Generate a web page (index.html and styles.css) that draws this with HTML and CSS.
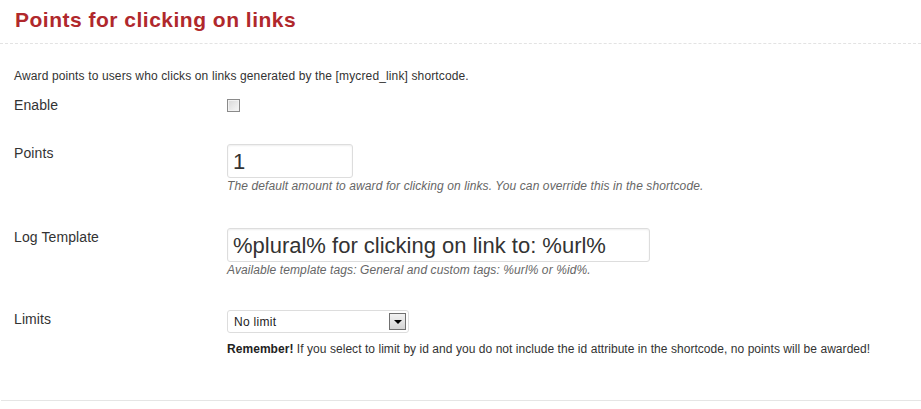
FILE: index.html
```html
<!DOCTYPE html>
<html lang="en">
<head>
<meta charset="utf-8">
<title>Points for clicking on links</title>
<link rel="stylesheet" href="styles.css">
</head>
<body>
<div class="hook">
  <h2 class="hook-title">Points for clicking on links</h2>
  <p class="hook-intro">Award points to users who clicks on links generated by the [mycred_link] shortcode.</p>

  <div class="form-rows">
    <div class="row row-enable">
      <label class="row-label" for="enable">Enable</label>
      <div class="row-field">
        <input type="checkbox" id="enable" class="checkbox">
      </div>
    </div>

    <div class="row row-points">
      <label class="row-label" for="points">Points</label>
      <div class="row-field">
        <input type="text" id="points" class="text-input input-short" value="1">
        <span class="description">The default amount to award for clicking on links. You can override this in the shortcode.</span>
      </div>
    </div>

    <div class="row">
      <label class="row-label" for="log">Log Template</label>
      <div class="row-field">
        <input type="text" id="log" class="text-input input-long" value="%plural% for clicking on link to: %url%">
        <span class="description">Available template tags: General and custom tags: %url% or %id%.</span>
      </div>
    </div>

    <div class="row">
      <span class="row-label">Limits</span>
      <div class="row-field">
        <div class="select">
          <span class="select-value">No limit</span>
          <span class="select-arrow"><span class="tri"></span></span>
        </div>
        <p class="note"><strong>Remember!</strong> If you select to limit by id and you do not include the id attribute in the shortcode, no points will be awarded!</p>
      </div>
    </div>
  </div>
</div>
</body>
</html>
```

FILE: styles.css
```css
html, body {
  margin: 0;
  padding: 0;
  background: #ffffff;
}

body {
  font-family: "Liberation Sans", Arial, sans-serif;
  color: #333333;
  width: 921px;
  height: 409px;
  overflow: hidden;
}

.hook {
  border-bottom: 1px solid #e5e5e5;
  margin-left: 1px;
  height: 401px;
  box-sizing: border-box;
}

.hook-title {
  margin: 0 0 0 -1px;
  padding: 7px 0 11px 15px;
  font-size: 21px;
  line-height: 25px;
  font-weight: bold;
  letter-spacing: 0.5px;
  color: #b0282c;
  border-bottom: 1px dashed #e3e3e3;
}

.hook-intro {
  margin: 24px 0 0 13px;
  font-size: 12px;
  line-height: 16px;
  letter-spacing: 0.13px;
}

.form-rows {
  display: flex;
  flex-direction: column;
  gap: 32px;
  margin-top: 13px;
  padding-left: 13px;
}

.row {
  display: grid;
  grid-template-columns: 213px 1fr;
  align-items: start;
}

.row-enable {
  margin-bottom: -1px;
}

.row-enable .row-label {
  line-height: 16px;
}

.row-points {
  margin-bottom: 2px;
}

.row-label {
  font-size: 14px;
  line-height: 18px;
  letter-spacing: 0.1px;
}

.row-field {
  display: flex;
  flex-direction: column;
  align-items: flex-start;
}

.checkbox {
  appearance: none;
  -webkit-appearance: none;
  margin: 2px 0 0 0;
  width: 13px;
  height: 13px;
  border: 1px solid #8a8a8a;
  box-sizing: border-box;
  background: linear-gradient(135deg, #d8d8d8 0%, #f8f8f8 100%);
  box-shadow: inset 0 0 0 1px #f2f2f2;
}

.text-input {
  margin: 0;
  box-sizing: border-box;
  height: 34px;
  border: 1px solid #dddddd;
  border-radius: 3px;
  box-shadow: inset 0 1px 2px rgba(0, 0, 0, 0.07);
  background: #ffffff;
  font-family: "Liberation Sans", Arial, sans-serif;
  font-size: 22px;
  color: #333333;
  padding: 2px 5px 0 5px;
  outline: none;
}

.input-short {
  width: 126px;
}

.input-long {
  width: 423px;
}

.description {
  font-size: 12px;
  line-height: 16px;
  font-style: italic;
  letter-spacing: 0.1px;
  color: #666666;
}

.select {
  display: flex;
  align-items: center;
  justify-content: space-between;
  box-sizing: border-box;
  width: 182px;
  height: 23px;
  border: 1px solid #dddddd;
  border-radius: 3px;
  padding: 0 2px 0 6px;
  background: #ffffff;
}

.select-value {
  font-size: 12px;
  letter-spacing: 0.3px;
  color: #222222;
}

.select-arrow {
  display: flex;
  align-items: center;
  justify-content: center;
  box-sizing: border-box;
  width: 17px;
  height: 17px;
  border: 1px solid #707070;
  background: linear-gradient(#f2f2f2, #d4d4d4);
}

.tri {
  width: 0;
  height: 0;
  border-left: 4px solid transparent;
  border-right: 4px solid transparent;
  border-top: 4px solid #000000;
  margin-top: 1px;
}

.note {
  margin: 8px 0 0 0;
  font-size: 12px;
  line-height: 16px;
  letter-spacing: 0.05px;
  color: #333333;
}

.note strong {
  color: #222222;
}
```
